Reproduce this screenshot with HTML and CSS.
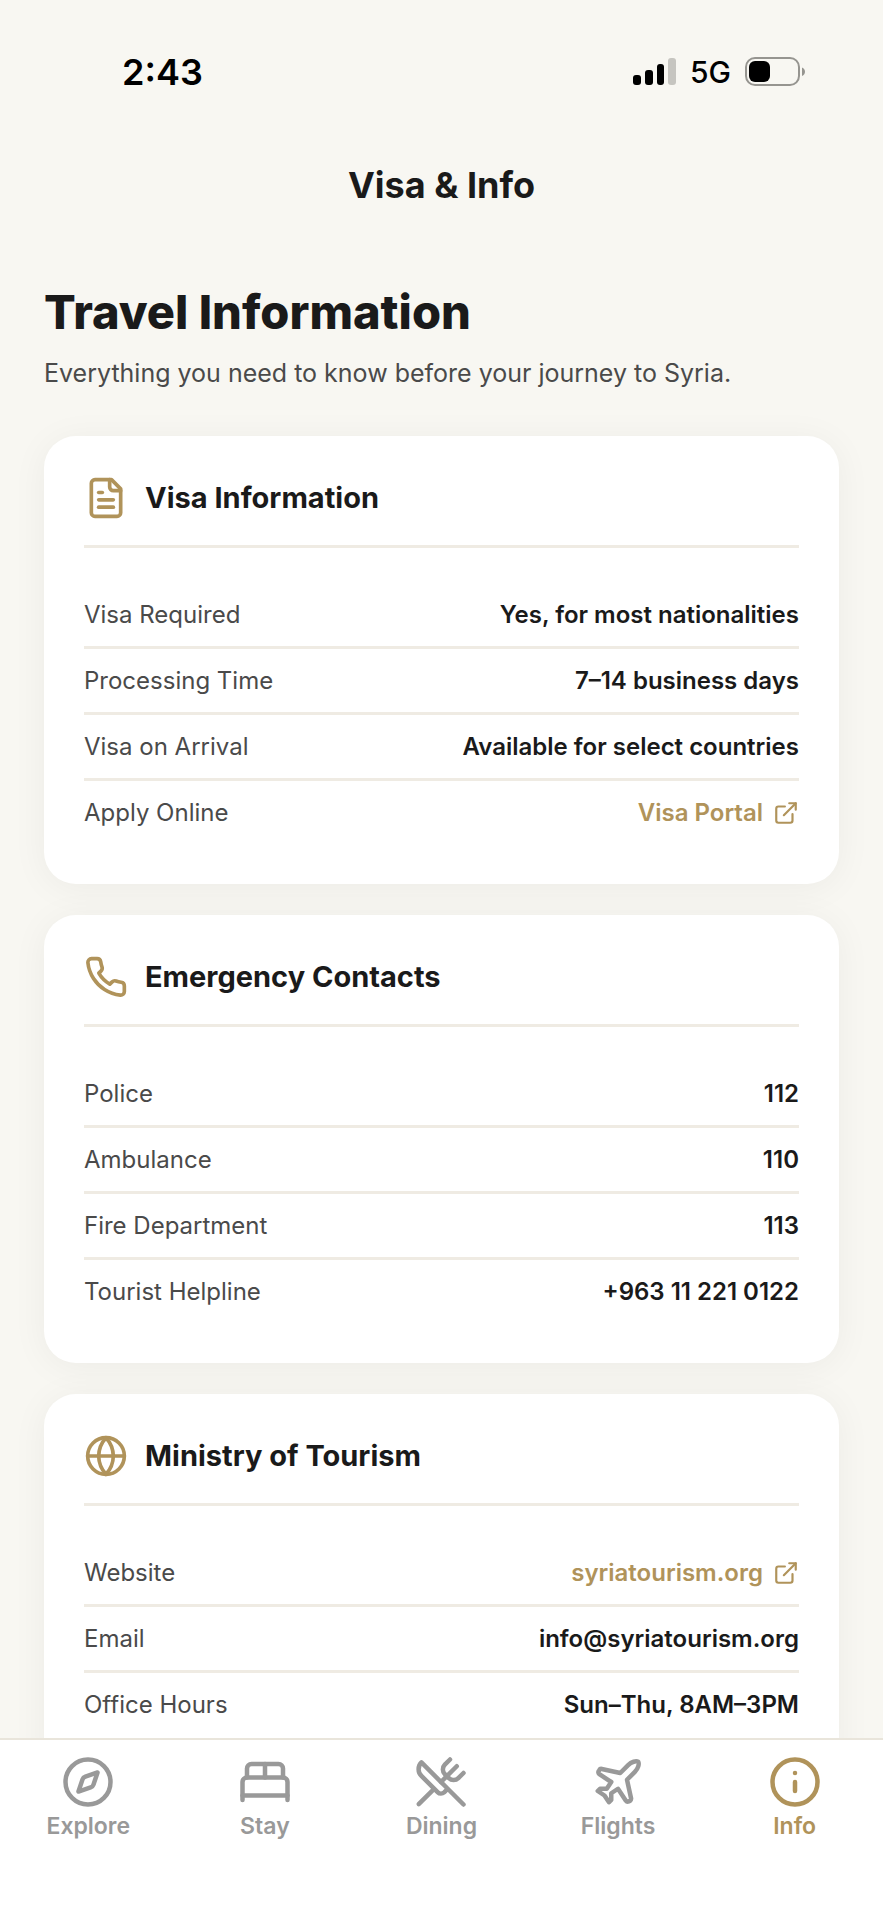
FILE: index.html
```html
<!DOCTYPE html>
<html lang="en">

<head>
    <meta charset="UTF-8">
    <meta name="viewport" content="width=device-width, initial-scale=1.0">
    <title>Visa &amp; Info</title>
    <link rel="stylesheet" href="styles.css">
</head>

<body>
    <!-- Shared icons -->
    <svg class="sprite" aria-hidden="true">
        <symbol id="external" viewBox="0 0 24 24">
            <path d="M15 3h6v6" />
            <path d="M10 14 21 3" />
            <path d="M18 13v6a2 2 0 0 1-2 2H5a2 2 0 0 1-2-2V8a2 2 0 0 1 2-2h6" />
        </symbol>
    </svg>

    <!-- Status bar -->
    <div class="status">
        <span class="time">2:43</span>
        <div class="signals">
            <svg width="43" height="28" viewBox="0 0 43 28" aria-hidden="true">
                <rect x="0" y="17" width="8" height="10" rx="3" />
                <rect x="12" y="12" width="8" height="15" rx="3" />
                <rect x="24" y="6" width="7" height="21" rx="3" />
                <rect x="35" y="0" width="8" height="27" rx="3" fill="#c6c5c0" />
            </svg>
            <span class="network">5G</span>
            <svg width="61" height="30" viewBox="0 0 61 30" aria-hidden="true">
                <rect x="1" y="1" width="53" height="27" rx="9" fill="none" stroke="#969590" stroke-width="2" />
                <rect x="4" y="4" width="21" height="21" rx="6" />
                <path d="M57 10.5c4 1.5 4 7 0 8.500z" fill="#969590" />
            </svg>
        </div>
    </div>

    <header class="topbar">Visa &amp; Info</header>

    <main class="content">
        <h1>Travel Information</h1>
        <p class="intro">Everything you need to know before your journey to Syria.</p>

        <section class="card">
            <div class="card-header">
                <svg class="icon" viewBox="0 0 24 24" aria-hidden="true">
                    <path d="M15 2H6a2 2 0 0 0-2 2v16a2 2 0 0 0 2 2h12a2 2 0 0 0 2-2V7Z" />
                    <path d="M14 2v4a2 2 0 0 0 2 2h4" />
                    <path d="M10 9H8" />
                    <path d="M16 13H8" />
                    <path d="M16 17H8" />
                </svg>
                <h2>Visa Information</h2>
            </div>
            <dl>
                <div class="row">
                    <dt>Visa Required</dt>
                    <dd>Yes, for most nationalities</dd>
                </div>
                <div class="row">
                    <dt>Processing Time</dt>
                    <dd>7–14 business days</dd>
                </div>
                <div class="row">
                    <dt>Visa on Arrival</dt>
                    <dd>Available for select countries</dd>
                </div>
                <div class="row">
                    <dt>Apply Online</dt>
                    <dd><a href="#">Visa Portal <svg class="icon-small"><use href="#external" /></svg></a></dd>
                </div>
            </dl>
        </section>

        <section class="card">
            <div class="card-header">
                <svg class="icon" viewBox="0 0 24 24" aria-hidden="true">
                    <path d="M22 16.92v3a2 2 0 0 1-2.18 2 19.79 19.79 0 0 1-8.63-3.07 19.5 19.5 0 0 1-6-6 19.79 19.79 0 0 1-3.07-8.67A2 2 0 0 1 4.11 2h3a2 2 0 0 1 2 1.72 12.84 12.84 0 0 0 .7 2.81 2 2 0 0 1-.45 2.11L8.09 9.91a16 16 0 0 0 6 6l1.27-1.27a2 2 0 0 1 2.11-.45 12.84 12.84 0 0 0 2.81.7A2 2 0 0 1 22 16.92z" />
                </svg>
                <h2>Emergency Contacts</h2>
            </div>
            <dl>
                <div class="row">
                    <dt>Police</dt>
                    <dd>112</dd>
                </div>
                <div class="row">
                    <dt>Ambulance</dt>
                    <dd>110</dd>
                </div>
                <div class="row">
                    <dt>Fire Department</dt>
                    <dd>113</dd>
                </div>
                <div class="row">
                    <dt>Tourist Helpline</dt>
                    <dd>+963 11 221 0122</dd>
                </div>
            </dl>
        </section>

        <section class="card">
            <div class="card-header">
                <svg class="icon" viewBox="0 0 24 24" aria-hidden="true">
                    <circle cx="12" cy="12" r="10" />
                    <path d="M12 2a15.3 15.3 0 0 1 4 10 15.3 15.3 0 0 1-4 10 15.3 15.3 0 0 1-4-10 15.3 15.3 0 0 1 4-10z" />
                    <path d="M2 12h20" />
                </svg>
                <h2>Ministry of Tourism</h2>
            </div>
            <dl>
                <div class="row">
                    <dt>Website</dt>
                    <dd><a href="#">syriatourism.org <svg class="icon-small"><use href="#external" /></svg></a></dd>
                </div>
                <div class="row">
                    <dt>Email</dt>
                    <dd>info@syriatourism.org</dd>
                </div>
                <div class="row">
                    <dt>Office Hours</dt>
                    <dd>Sun–Thu, 8AM–3PM</dd>
                </div>
            </dl>
        </section>
    </main>

    <!-- Bottom tabs -->
    <nav class="tabs">
        <a href="#">
            <svg viewBox="0 0 24 24" aria-hidden="true">
                <path d="m16.24 7.76-1.804 5.411a2 2 0 0 1-1.265 1.265L7.76 16.24l1.804-5.411a2 2 0 0 1 1.265-1.265z" />
                <circle cx="12" cy="12" r="10" />
            </svg>
            Explore
        </a>
        <a href="#">
            <svg viewBox="0 0 24 24" aria-hidden="true">
                <path d="M2 20v-8a2 2 0 0 1 2-2h16a2 2 0 0 1 2 2v8" />
                <path d="M4 10V6a2 2 0 0 1 2-2h12a2 2 0 0 1 2 2v4" />
                <path d="M12 4v6" />
                <path d="M2 18h20" />
            </svg>
            Stay
        </a>
        <a href="#">
            <svg viewBox="0 0 24 24" aria-hidden="true">
                <path d="m16 2-2.3 2.3a3 3 0 0 0 0 4.2l1.8 1.8a3 3 0 0 0 4.2 0L22 8" />
                <path d="M15 15 3.3 3.3a4.2 4.2 0 0 0 0 6l7.3 7.3c.7.7 2 .7 2.8 0L15 15Zm0 0 7 7" />
                <path d="m2.1 21.8 6.4-6.3" />
                <path d="m19 5-7 7" />
            </svg>
            Dining
        </a>
        <a href="#">
            <svg viewBox="0 0 24 24" aria-hidden="true">
                <path d="M17.8 19.2 16 11l3.5-3.5C21 6 21.5 4 21 3c-1-.5-3 0-4.5 1.5L13 8 4.8 6.2c-.5-.1-.9.1-1.1.5l-.3.5c-.2.5-.1 1 .3 1.3L9 12l-2 3H4l-1 1 3 2 2 3 1-1v-3l3-2 3.5 5.3c.3.4.8.5 1.3.3l.5-.2c.4-.3.6-.7.5-1.2z" />
            </svg>
            Flights
        </a>
        <a href="#" class="active" aria-current="page">
            <svg viewBox="0 0 24 24" aria-hidden="true">
                <circle cx="12" cy="12" r="10" />
                <path d="M12 16v-4" />
                <path d="M12 8h.01" />
            </svg>
            Info
        </a>
    </nav>
</body>

</html>
```
FILE: styles.css
```css
* {
    box-sizing: border-box;
    margin: 0;
    padding: 0;
}

body {
    display: flex;
    flex-direction: column;
    height: 100vh;
    overflow: hidden;
    background-color: #f8f7f2;
    color: #1a1a1a;
    font-family: Inter, "Liberation Sans", sans-serif;
}

a {
    color: inherit;
    text-decoration: none;
}

svg {
    flex-shrink: 0;
}

.sprite {
    display: none;
}

/* status bar */
.status {
    display: flex;
    justify-content: space-between;
    align-items: center;
    flex-shrink: 0;
    height: 143px;
    padding: 0 77px 0 122px;
    color: #000;
}

.time {
    font-size: 36px;
    font-weight: 600;
}

.signals {
    display: flex;
    align-items: center;
    gap: 14px;
}

.network {
    font-size: 30px;
    font-weight: 500;
}

.topbar {
    flex-shrink: 0;
    font-size: 36px;
    font-weight: 700;
    line-height: 84px;
    text-align: center;
}

.content {
    flex: 1;
    min-height: 0;
    padding: 57px 44px 0;
}

h1 {
    font-size: 47px;
    font-weight: 800;
    line-height: 56px;
}

.intro {
    margin: 16px 0 46px;
    color: #4a4a4a;
    font-size: 25px;
    line-height: 34px;
}

/* cards */
.card {
    margin-bottom: 31px;
    padding: 40px;
    border-radius: 32px;
    background-color: #fff;
    box-shadow: 0 4px 36px rgba(26, 26, 26, 0.05);
}

.card-header {
    display: flex;
    align-items: center;
    gap: 17px;
    margin-bottom: 35px;
    padding-bottom: 25px;
    border-bottom: 3px solid #efebe3;
}

.icon,
.icon-small,
.tabs svg {
    fill: none;
    stroke: currentColor;
    stroke-width: 2;
    stroke-linecap: round;
    stroke-linejoin: round;
}

.icon {
    width: 44px;
    height: 44px;
    color: #b0935a;
}

h2 {
    font-size: 29px;
    font-weight: 700;
    line-height: 34px;
}

.row {
    display: flex;
    justify-content: space-between;
    align-items: center;
    height: 66px;
    border-bottom: 3px solid #efebe3;
    font-size: 24px;
}

.row:last-child {
    height: 63px;
    border-bottom: none;
}

dt {
    color: #4a4a4a;
}

dd {
    font-weight: 600;
}

dd a {
    display: flex;
    align-items: center;
    gap: 10px;
    color: #b0935a;
}

.icon-small {
    width: 26px;
    height: 26px;
}

/* bottom tabs */
.tabs {
    position: relative;
    display: flex;
    flex-shrink: 0;
    height: 182px;
    padding-top: 15px;
    border-top: 2px solid #e9e5db;
    background-color: #fff;
}

.tabs a {
    display: flex;
    flex: 1;
    flex-direction: column;
    align-items: center;
    gap: 3px;
    color: #999;
    font-size: 23px;
    font-weight: 600;
    line-height: 28px;
}

.tabs svg {
    width: 54px;
    height: 54px;
}

.tabs .active {
    color: #b0935a;
}
```
